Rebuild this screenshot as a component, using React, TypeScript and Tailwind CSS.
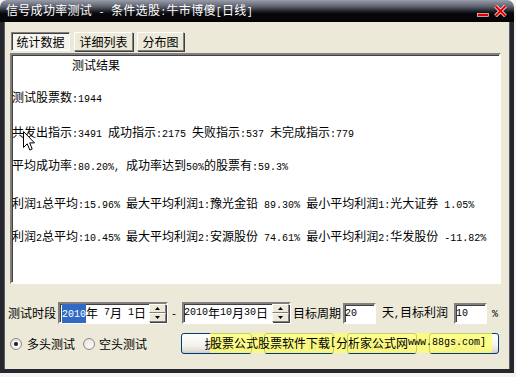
import React from 'react'

// ASCII runs use a 6px-wide mono face, like the half-width glyphs of SimSun
function T({ s }: { s: string }) {
  const parts = s.split(/([\x20-\x7e]+)/)
  return (
    <>
      {parts.map((p, i) =>
        i % 2 === 1 ? (
          <span key={i} className="font-['Liberation_Mono',monospace] text-[10px]">
            {p}
          </span>
        ) : (
          <span key={i}>{p}</span>
        )
      )}
    </>
  )
}

const sunken =
  'border-2 border-t-[#808080] border-l-[#808080] border-b-white border-r-white shadow-[inset_1px_1px_0_#404040]'
const raised =
  'border border-t-white border-l-white border-b-[#808080] border-r-[#808080] shadow-[1px_1px_0_#404040]'

const Spinner = () => (
  <div className="w-[17px] h-full flex flex-col">
    <div className={`flex-1 bg-[#ece9d8] flex items-center justify-center ${raised}`}>
      <svg width="5" height="3" viewBox="0 0 5 3">
        <path d="M2.5 0 L5 3 L0 3 Z" fill="#000" />
      </svg>
    </div>
    <div className={`flex-1 bg-[#ece9d8] flex items-center justify-center ${raised}`}>
      <svg width="5" height="3" viewBox="0 0 5 3">
        <path d="M0 0 L5 0 L2.5 3 Z" fill="#000" />
      </svg>
    </div>
  </div>
)

const XpButton = ({ label, className = '' }: { label: string; className?: string }) => (
  <div
    className={`h-[21px] rounded-[3px] border border-[#003c74] bg-[linear-gradient(to_bottom,#ffffff_0%,#f3f3ef_60%,#e0ddd2_90%,#c9c6d6_100%)] flex items-center justify-center ${className}`}
  >
    {label}
  </div>
)

const Radio = ({ checked }: { checked?: boolean }) => (
  <div className="w-[12px] h-[12px] rounded-full border border-[#8a8a8a] bg-[radial-gradient(circle_at_70%_70%,#ffffff,#dcdad0)] flex items-center justify-center">
    {checked && <div className="w-[4px] h-[4px] rounded-full bg-[#1a1a1a]" />}
  </div>
)

export default function App() {
  return (
    <div className="w-[516px] h-[377px] bg-[#f4f4f4] font-['Noto_Sans_CJK_SC',sans-serif] text-[12px] leading-[16px] text-black">
      <div className="w-[514px] h-[373px] flex flex-col">
        {/* Title bar */}
        <div className="h-[22px] flex items-center rounded-t-[7px] bg-[linear-gradient(to_bottom,#9a9eaa_0%,#5d606d_30%,#22232b_50%,#08080c_62%,#050508_100%)] pl-[6px] pr-[7px]">
          <span className="text-white text-[12px] tracking-[0.3px] whitespace-pre">
            <T s="信号成功率测试 - 条件选股:牛市博傻[日线]" />
          </span>
          <div className="ml-auto flex items-center gap-[5px]">
            <svg width="12" height="12" viewBox="0 0 12 12">
              <rect x="0.5" y="8.5" width="11" height="3" fill="#e10000" stroke="#fff" strokeWidth="0.6" />
            </svg>
            <svg width="13" height="12" viewBox="0 0 13 12">
              <path d="M1.5 1 L11.5 11 M11.5 1 L1.5 11" stroke="#fff" strokeWidth="3.6" />
              <path d="M1.5 1 L11.5 11 M11.5 1 L1.5 11" stroke="#e10000" strokeWidth="2.2" />
            </svg>
          </div>
        </div>

        {/* Body */}
        <div className="flex-1 flex flex-col bg-[#ece9d8] border-x-[4px] border-b-[4px] border-[#25262e] shadow-[inset_1px_0_0_#5a5c68,inset_-1px_0_0_#5a5c68]">
          {/* Tabs */}
          <div className="mt-[10px] ml-[7px] flex gap-[4px] h-[19px]">
            <div className="w-[59px] bg-[#f6f5ef] border border-t-[#808080] border-l-[#808080] border-b-white border-r-white shadow-[inset_1px_1px_0_#404040] flex items-center justify-center">
              统计数据
            </div>
            <div className={`w-[59px] flex items-center justify-center ${raised}`}>详细列表</div>
            <div className={`w-[47px] flex items-center justify-center ${raised}`}>分布图</div>
          </div>

          {/* Result area */}
          <div className={`relative mt-[2px] ml-[6px] w-[491px] h-[231px] bg-white ${sunken} whitespace-pre`}>
            <div className="mt-[2px] ml-[60px]">测试结果</div>
            <div className="mt-[16px]">
              <T s="测试股票数:1944" />
            </div>
            <div className="mt-[16px]">
              <T s="共发出指示:3491 成功指示:2175 失败指示:537 未完成指示:779" />
            </div>
            <div className="mt-[14px]">
              <T s="平均成功率:80.20%, 成功率达到50%的股票有:59.3%" />
            </div>
            <div className="mt-[19px]">
              <T s="利润1总平均:15.96% 最大平均利润1:豫光金铅 89.30% 最小平均利润1:光大证券 1.05%" />
            </div>
            <div className="mt-[14px]">
              <T s="利润2总平均:10.45% 最大平均利润2:安源股份 74.61% 最小平均利润2:华发股份 -11.82%" />
            </div>

            {/* mouse pointer */}
            <svg className="absolute left-[11px] top-[76px]" width="13" height="21" viewBox="0 0 13 21">
              <path
                d="M0.5 0.5 L0.5 16.5 L4.2 12.8 L6.8 19 L9.2 18 L6.7 11.9 L11.5 11.9 Z"
                fill="#fff"
                stroke="#000"
                strokeWidth="1"
              />
            </svg>
          </div>

          {/* Period row */}
          <div className="mt-[18px] h-[22px] flex items-center whitespace-pre">
            <span className="ml-[4px]">测试时段</span>
            <div className={`ml-[2px] w-[110px] h-[22px] bg-white flex ${sunken}`}>
              <div className="flex-1 flex items-center pl-[2px]">
                <span className="bg-[#316ac5] text-white">
                  <T s="2010" />
                </span>
                <T s="年 7月 1日" />
              </div>
              <Spinner />
            </div>
            <span className="ml-[3px]">
              <T s="-" />
            </span>
            <div className={`ml-[5px] w-[109px] h-[22px] bg-white flex ${sunken}`}>
              <div className="flex-1 flex items-center pl-[0px]">
                <T s="2010年10月30日" />
              </div>
              <Spinner />
            </div>
            <span className="ml-[2px]">目标周期</span>
            <div className={`ml-[2px] w-[33px] h-[21px] bg-white flex items-start pt-[1px] ${sunken}`}>
              <T s="20" />
            </div>
            <span className="ml-[6px]">
              <T s="天," />
              目标利润
            </span>
            <div className={`ml-[6px] w-[33px] h-[21px] bg-white flex items-start pt-[1px] ${sunken}`}>
              <T s="10" />
            </div>
            <span className="ml-[5px]">
              <T s="%" />
            </span>
          </div>

          {/* Direction + actions */}
          <div className="relative mt-[9px] h-[21px] flex items-center">
            <div className="ml-[6px]">
              <Radio checked />
            </div>
            <span className="ml-[5px]">多头测试</span>
            <div className="ml-[8px]">
              <Radio />
            </div>
            <span className="ml-[4px]">空头测试</span>
            <XpButton label="执行" className="ml-[34px] w-[71px]" />
            <XpButton label="刷新列表" className="ml-[12px] w-[70px] text-[#b8b6a8]" />
            <XpButton label="保存" className="ml-[13px] w-[70px] text-[#b8b6a8]" />
            <XpButton label="关闭" className="ml-[12px] w-[70px] text-[#b8b6a8]" />

            {/* overlay banner */}
            <div className="absolute left-[206px] top-0 w-[282px] h-[20px] bg-[#ffff66]/75 flex items-center whitespace-pre">
              <T s="股票公式股票软件下载[分析家公式网www.88gs.com]" />
            </div>
          </div>
        </div>
      </div>
    </div>
  )
}
